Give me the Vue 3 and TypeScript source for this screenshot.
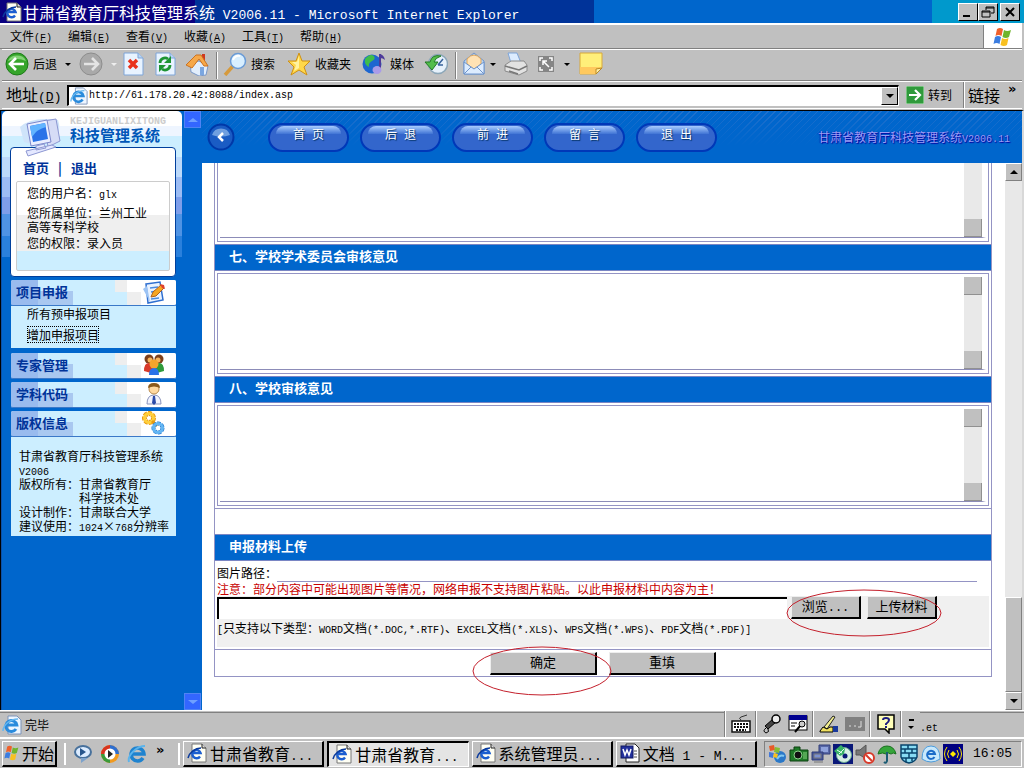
<script setup lang="ts">
import { ref } from 'vue'

interface MenuEntry { label: string; key: string }
interface Task { icon: string; label: string; latin: string; active: boolean }

const menus: MenuEntry[] = [
  { label: '文件', key: 'F' },
  { label: '编辑', key: 'E' },
  { label: '查看', key: 'V' },
  { label: '收藏', key: 'A' },
  { label: '工具', key: 'T' },
  { label: '帮助', key: 'H' },
]
const pills: string[] = ['首 页', '后 退', '前 进', '留 言', '退 出']
const tasks: Task[] = [
  { icon: '#ie-page', label: '甘肃省教育', latin: '...', active: false },
  { icon: '#ie-page', label: '甘肃省教育', latin: '...', active: true },
  { icon: '#ie-page', label: '系统管理员', latin: '...', active: false },
  { icon: '#word', label: '文档', latin: ' 1 - M...', active: false },
]
const address = ref('http://61.178.20.42:8088/index.asp')
const opinionSix = ref('')
const opinionSeven = ref('')
const opinionEight = ref('')
const picturePath = ref('')
const filePath = ref('')
</script>

<template>
  <div class="window">
    <svg class="defs" aria-hidden="true">
      <symbol id="ie-page" viewBox="0 0 20 20">
        <path d="M5 1h10l4 4v14H5z" fill="#fffff4" stroke="#777" />
        <path d="M15 1v4h4" fill="#ddd" stroke="#222" />
        <path d="M13 13.500a4.200 4.200 0 1 1 .6-3.500H6.500" fill="none" stroke="#1c5fd0" stroke-width="2.400" />
        <path d="M1 15C2 10 8 5 14 5" fill="none" stroke="#0a3a9c" stroke-width="1.500" />
      </symbol>
      <symbol id="ie-blue" viewBox="0 0 20 20">
        <path d="M6 1h9l4 4v14H6z" fill="#eef6ff" stroke="#7c93b8" />
        <path d="M14 14a5.500 5.500 0 1 1 .8-4H5" fill="none" stroke="#2a8bdc" stroke-width="3" />
        <path d="M1 16C1 10 8 4 16 4" fill="none" stroke="#66b8f0" stroke-width="1.500" />
      </symbol>
      <symbol id="word" viewBox="0 0 20 20">
        <path d="M6 1h9l4 4v14H6z" fill="#fff" stroke="#222" />
        <path d="M14 8h3M14 11h3M14 14h3" stroke="#555" />
        <rect x="1" y="3" width="12" height="12" fill="#22309c" stroke="#101860" />
        <path d="M3 6l2 6 2-5 2 5 2-6" fill="none" stroke="#fff" stroke-width="1.500" />
      </symbol>
      <symbol id="flag" viewBox="0 0 20 20">
        <path d="M4 2q3-2 6 0L8.500 9q-3-2-6 0z" fill="#f0602a" />
        <path d="M11 3q3 2 7 0l-2 7q-3 2-6.500 0z" fill="#6fb52c" />
        <path d="M2 10q3-2 6 0l-1.500 7q-3-2-6 0z" fill="#3b7de0" />
        <path d="M9 11q3 2 6.500 0L14 18q-3 2-6.500 0z" fill="#f8c020" />
      </symbol>
    </svg>

    <header class="title-bar">
      <svg class="i20"><use href="#ie-page" /></svg>
      <h1>甘肃省教育厅科技管理系统<span class="lat"> V2006.11 - Microsoft Internet Explorer</span></h1>
      <div class="win-buttons">
        <button type="button" aria-label="最小化"><svg viewBox="0 0 16 14"><path d="M3 11h7" stroke="#000" stroke-width="2" /></svg></button>
        <button type="button" aria-label="还原"><svg viewBox="0 0 16 14"><path d="M6 5V2h8v6h-3M6 3h8M2 6h8v6H2zM2 7h8" fill="none" stroke="#000" /></svg></button>
        <button type="button" aria-label="关闭" class="close"><svg viewBox="0 0 16 14"><path d="M4 3l8 8M12 3l-8 8" stroke="#000" stroke-width="2" /></svg></button>
      </div>
    </header>

    <nav class="menu-bar">
      <button v-for="m in menus" :key="m.key" type="button">{{ m.label }}<span class="lat">(<u>{{ m.key }}</u>)</span></button>
      <div class="throbber"><svg class="i20"><use href="#flag" /></svg></div>
    </nav>

    <div class="toolbar">
      <button type="button" class="w-back">
        <svg class="i24" viewBox="0 0 24 24"><circle cx="12" cy="12" r="11" fill="#36a52b" stroke="#1c7a18" /><path d="M3 9a9.500 8 0 0 1 18 0q-9-4-18 0z" fill="#83d375" /><path d="M19 12H6M11 6l-6 6 6 6" fill="none" stroke="#fff" stroke-width="2.600" /></svg>
        <span>后退</span><i class="tri"></i>
      </button>
      <button type="button" class="w-mid" aria-label="前进">
        <svg class="i24" viewBox="0 0 24 24"><circle cx="12" cy="12" r="11" fill="#a9a9a9" stroke="#8d8d8d" /><path d="M5 12h13M13 6l6 6-6 6" fill="none" stroke="#e4e4e4" stroke-width="2.600" /></svg>
        <i class="tri pale"></i>
      </button>
      <button type="button" class="w-one" aria-label="停止">
        <svg class="i24" viewBox="0 0 24 24"><path d="M3 1h14l5 5v17H3z" fill="#e8f3ff" stroke="#7fa5d8" /><path d="M17 1v5h5" fill="#b9d5f4" stroke="#7fa5d8" /><path d="M8 8l8 8M16 8l-8 8" stroke="#e8321c" stroke-width="3.500" /></svg>
      </button>
      <button type="button" class="w-one" aria-label="刷新">
        <svg class="i24" viewBox="0 0 24 24"><path d="M3 1h14l5 5v17H3z" fill="#e8f3ff" stroke="#7fa5d8" /><path d="M17 1v5h5" fill="#b9d5f4" stroke="#7fa5d8" /><path d="M7 11a5 5 0 0 1 8-4M17 13a5 5 0 0 1-8 4" fill="none" stroke="#1c9433" stroke-width="2.800" /><path d="M18 4v7h-7zM6 20v-7h7z" fill="#1c9433" /></svg>
      </button>
      <button type="button" class="w-one" aria-label="主页">
        <svg class="i24" viewBox="0 0 24 24"><path d="M17 2h3v7h-3z" fill="#d03a20" /><path d="M5 11l9-2 9 5-2 9-7 1-8-4z" fill="#e2eefc" stroke="#7a98c8" /><path d="M1 13L11 3l5 0 7 11-4 0-5-7-7 9z" fill="#f6a849" stroke="#cb7120" /><path d="M15 15h4v8h-4z" fill="#7aa6e0" /></svg>
      </button>
      <i class="sep"></i>
      <button type="button" class="w-search">
        <svg class="i24" viewBox="0 0 24 24"><path d="M2 23l8-9" stroke="#d69a3c" stroke-width="3.500" /><circle cx="15" cy="9" r="7.500" fill="#d8efff" stroke="#6a9bd6" stroke-width="1.500" /><path d="M10 8q2-5 7-4" fill="none" stroke="#fff" stroke-width="2" /></svg>
        <span>搜索</span>
      </button>
      <button type="button" class="w-fav">
        <svg class="i24" viewBox="0 0 24 24"><path d="M12 1l3 8 8 0-6 6 3 8-8-5-8 5 3-8-6-6 8 0z" fill="#ffd84a" stroke="#cf9012" /><path d="M12 4l0 12-5 3 2-6-4-3 5 0z" fill="#fff2a0" /></svg>
        <span>收藏夹</span>
      </button>
      <button type="button" class="w-media">
        <svg class="i24" viewBox="0 0 24 24"><circle cx="10" cy="12" r="9.500" fill="#1d66d0" /><path d="M3 7q5-6 9-3 2 3-2 5t-3 6q-5-2-4-8z" fill="#3fbd4a" /><path d="M18 2v15" stroke="#4d3a9a" stroke-width="2" /><path d="M18 2q4 1 5 6-2-2-5-2z" fill="#4d3a9a" /><ellipse cx="15" cy="18" rx="4.500" ry="4" fill="#a99be8" /></svg>
        <span>媒体</span>
      </button>
      <button type="button" class="w-one" aria-label="历史">
        <svg class="i24" viewBox="0 0 24 24"><circle cx="14" cy="12" r="9.500" fill="#e6f1fb" stroke="#8ba6b8" stroke-width="1.500" /><path d="M14 13l5-6M14 13h5" stroke="#38639c" stroke-width="1.500" /><path d="M17 4Q8 2 6 10H1l7 8 6-8h-4q1-4 7-6z" fill="#53bd4b" stroke="#217a24" /></svg>
      </button>
      <i class="sep"></i>
      <button type="button" class="w-mid" aria-label="邮件">
        <svg class="i24" viewBox="0 0 24 24"><path d="M2 9L12 1l10 8v13H2z" fill="#b7d4f4" stroke="#6f95cc" /><path d="M5 12V7q7-8 14 0v5l-7 5z" fill="#ffe2b4" stroke="#dba45c" /><path d="M2 10l10 7 10-7v12H2z" fill="#dcecff" stroke="#6f95cc" /><path d="M2 22l7-7M22 22l-7-7" stroke="#6f95cc" /></svg>
        <i class="tri near"></i>
      </button>
      <button type="button" class="w-one" aria-label="打印">
        <svg class="i24" viewBox="0 0 24 24"><path d="M4 1h9l4 10H7z" fill="#dcecff" stroke="#7fa5d8" /><path d="M1 13l6-4h13l3 4v6l-8 4-14-4z" fill="#e2e2e2" stroke="#8a8a8a" /><path d="M1 14l14 4 8-4M5 19l9 3" fill="none" stroke="#777" stroke-width="1.500" /></svg>
      </button>
      <button type="button" class="w-size" aria-label="全屏">
        <svg class="i20" viewBox="0 0 20 20"><rect x="2" y="2" width="16" height="16" fill="#858585" /><path d="M4 7V4h3M13 4h3v3M16 13v3h-3M7 16H4v-3M7 7l6 6M7 11V7h4" fill="none" stroke="#fff" stroke-width="1.500" /></svg>
        <i class="tri"></i>
      </button>
      <button type="button" class="w-one" aria-label="便笺">
        <svg class="i24" viewBox="0 0 24 24"><path d="M1 1h22v15l-6 6H1z" fill="#ffef7a" stroke="#d8a93a" /><path d="M1 15h22l-6 7H1z" fill="#ffc95e" /><path d="M17 22v-5l6-1z" fill="#fff0a8" stroke="#b98a24" /></svg>
      </button>
    </div>

    <form class="address-bar" @submit.prevent>
      <label for="addr">地址<span class="lat">(<u>D</u>)</span></label>
      <div class="addr-box">
        <svg class="i18"><use href="#ie-blue" /></svg>
        <input id="addr" v-model="address" type="text" />
        <button type="button" class="drop" aria-label="展开地址"><i class="tri"></i></button>
      </div>
      <button type="submit" class="go">
        <svg class="i18" viewBox="0 0 18 18"><rect width="18" height="18" fill="#2f9a3b" stroke="#bfe6c2" /><path d="M3 9h11M9 4l5 5-5 5" fill="none" stroke="#fff" stroke-width="2.200" /></svg>转到
      </button>
      <div class="links"><span>链接</span><span class="chev">»</span></div>
    </form>

    <main class="content">
      <aside class="side">
        <div class="side-col">
          <section class="brand">
            <div class="brand-head">
              <svg class="logo" viewBox="0 0 44 42">
                <path d="M2 12Q14 1 40 5q4 10-4 20-16 8-30 2z" fill="#cfe4fa" />
                <path d="M26 6l12-2 4 22-12 6z" fill="#d6dcf6" stroke="#8d97d2" />
                <path d="M9 9l20-4 4 22-20 4z" fill="#e9edff" stroke="#7d88cc" />
                <path d="M12 11l15-3 3 16-15 3z" fill="#2a72e8" />
                <path d="M12 11l15-3 1 4q-9 2-14 10z" fill="#62b4ff" />
                <path d="M18 31l8-2 2 4-10 2zM8 36l26-6 4 2-28 9z" fill="#e4e8ff" stroke="#8d97d2" />
              </svg>
              <div class="brand-text">
                <small>KEJIGUANLIXITONG</small>
                <h2>科技管理系统</h2>
              </div>
            </div>
            <div class="user-card">
              <div class="user-links"><a href="#home">首页</a><span>|</span><a href="#exit">退出</a></div>
              <div class="user-info">
                <p>您的用户名：<span class="lat">glx</span></p>
                <p class="tight">您所属单位：兰州工业高等专科学校</p>
                <p>您的权限：录入员</p>
              </div>
            </div>
          </section>

          <section class="group first">
            <h3>项目申报
              <svg class="i24" viewBox="0 0 24 24"><path d="M4 4l14-2 3 18-15 3z" fill="#eaf3ff" stroke="#2f6fd0" stroke-width="1.500" /><path d="M1 9l4-3 3 16z" fill="#9cc3f4" /><path d="M8 8l8-1M9 12l6-1M9 19l8-1" stroke="#4b8ae0" stroke-width="1.500" /><path d="M9 17l2-5 8-7 3 3-8 8z" fill="#f6a623" stroke="#b0601a" /><path d="M18 4l4 1 1 4-3-1z" fill="#e0402c" /></svg>
            </h3>
            <ul>
              <li><a href="#all">所有预申报项目</a></li>
              <li><a href="#add" class="focused">增加申报项目</a></li>
            </ul>
          </section>
          <section class="group">
            <h3>专家管理
              <svg class="i24" viewBox="0 0 24 24"><circle cx="7" cy="6" r="4.500" fill="#7c3f1c" /><circle cx="17" cy="6" r="4.500" fill="#7c3f1c" /><path d="M2 18q0-9 6-8l4 6-3 4z" fill="#d83a2a" /><path d="M22 18q0-9-6-8l-4 6 3 4z" fill="#2f9a3b" /><circle cx="8" cy="7" r="2.500" fill="#f6b35a" /><circle cx="16" cy="7" r="2.500" fill="#f6b35a" /><circle cx="12" cy="11" r="4.500" fill="#f4a52c" /><path d="M7 22q0-7 5-7t5 7z" fill="#2a72e8" /></svg>
            </h3>
          </section>
          <section class="group">
            <h3>学科代码
              <svg class="i24" viewBox="0 0 24 24"><path d="M5 22q0-9 7-9t7 9z" fill="#f2f4ff" stroke="#8a94bc" /><path d="M11 14h2l1 7-2 2-2-2z" fill="#2a4aa8" /><circle cx="12" cy="7" r="5" fill="#ffd9a0" stroke="#b98a4c" /><path d="M6 6q0-5 6-5t6 5q-6-3-12 0z" fill="#8a5a1c" /></svg>
            </h3>
          </section>
          <section class="group last">
            <h3>版权信息
              <svg class="i24" viewBox="0 0 24 24"><circle cx="7" cy="7" r="4.500" fill="none" stroke="#e89a10" stroke-width="5" stroke-dasharray="3 1" /><circle cx="7" cy="7" r="4.500" fill="none" stroke="#ffcf3a" stroke-width="3" /><path d="M10 10l5 5" stroke="#e89a10" stroke-width="3" /><circle cx="16" cy="17" r="4.500" fill="none" stroke="#1c72c8" stroke-width="4" stroke-dasharray="3 1" /><circle cx="16" cy="17" r="4.500" fill="none" stroke="#63b6f4" stroke-width="3" /></svg>
            </h3>
            <div class="copyright">
              <p>甘肃省教育厅科技管理系统<span class="lat">V2006</span></p>
              <dl>
                <dt>版权所有：</dt><dd>甘肃省教育厅<br />科学技术处</dd>
                <dt>设计制作：</dt><dd>甘肃联合大学</dd>
                <dt>建议使用：</dt><dd><span class="lat">1024</span><span class="times">×</span><span class="lat">768</span>分辨率</dd>
              </dl>
            </div>
          </section>
        </div>
        <div class="side-scroll">
          <button type="button" aria-label="向上"><i class="tri up"></i></button>
          <button type="button" aria-label="向下"><i class="tri"></i></button>
        </div>
      </aside>

      <section class="page">
        <header class="page-head">
          <button type="button" class="round" aria-label="收起"><svg viewBox="0 0 28 28"><circle cx="14" cy="14" r="12.500" fill="#1a5cc4" stroke="#0038a8" stroke-width="2" /><path d="M5 12a9.500 9.500 0 0 1 18 0q-9 3-18 0z" fill="#6f9fe0" /><path d="M16 10l-4 4 4 4" fill="none" stroke="#fff" stroke-width="2.500" /></svg></button>
          <nav>
            <button v-for="p in pills" :key="p" type="button" class="pill">{{ p }}</button>
          </nav>
          <p class="sys">甘肃省教育厅科技管理系统<span class="lat">V2006.11</span></p>
        </header>

        <div class="page-body">
          <form class="sheet" @submit.prevent>
            <div class="area-cell cut">
              <div class="area-box">
                <textarea v-model="opinionSix" aria-label="意见"></textarea>
                <div class="area-scroll"><i></i></div>
              </div>
            </div>
            <h3><label for="op7">七、学校学术委员会审核意见</label></h3>
            <div class="area-cell">
              <div class="area-box">
                <textarea id="op7" v-model="opinionSeven"></textarea>
                <div class="area-scroll"><i></i><i></i></div>
              </div>
            </div>
            <h3><label for="op8">八、学校审核意见</label></h3>
            <div class="area-cell">
              <div class="area-box">
                <textarea id="op8" v-model="opinionEight"></textarea>
                <div class="area-scroll"><i></i><i></i></div>
              </div>
            </div>
            <div class="blank"></div>
            <h3>申报材料上传</h3>
            <div class="upload">
              <div class="path-row">
                <label for="pic">图片路径：</label>
                <input id="pic" v-model="picturePath" type="text" />
              </div>
              <p class="warn">注意：部分内容中可能出现图片等情况，网络申报不支持图片粘贴。以此申报材料中内容为主！</p>
              <div class="file-zone">
                <div class="file-row">
                  <input v-model="filePath" type="text" aria-label="上传文件" />
                  <div class="file-buttons">
                    <button type="button">浏览<span class="lat">...</span></button>
                    <button type="button">上传材料</button>
                    <svg class="ring ring-file" viewBox="0 0 156 48"><ellipse cx="78" cy="24" rx="77" ry="23" /></svg>
                  </div>
                </div>
                <p class="types"><span class="lat">[</span>只支持以下类型：<span class="lat">WORD</span>文档<span class="lat">(*.DOC,*.RTF)</span>、<span class="lat">EXCEL</span>文档<span class="lat">(*.XLS)</span>、<span class="lat">WPS</span>文档<span class="lat">(*.WPS)</span>、<span class="lat">PDF</span>文档<span class="lat">(*.PDF)]</span></p>
              </div>
            </div>
            <div class="actions">
              <div class="ok">
                <button type="submit">确定</button>
                <svg class="ring ring-ok" viewBox="0 0 140 50"><ellipse cx="70" cy="25" rx="69" ry="24" /></svg>
              </div>
              <button type="reset">重填</button>
            </div>
          </form>
          <div class="scrollbar">
            <button type="button" aria-label="向上滚动"><i class="tri up"></i></button>
            <div class="thumb"></div>
            <button type="button" aria-label="向下滚动"><i class="tri"></i></button>
          </div>
        </div>
      </section>
    </main>

    <footer class="status">
      <div class="done"><svg class="i20"><use href="#ie-blue" /></svg>完毕</div>
      <div class="ime">
        <div class="cell"><svg class="i20" viewBox="0 0 20 20"><path d="M10 6q-3-2 0-3t6-2" fill="none" stroke="#333" /><rect x="1" y="7" width="18" height="11" fill="#fff" stroke="#111" stroke-width="1.500" /><path d="M3 10h14M3 13h14M5 16h10" stroke="#111" stroke-width="2" stroke-dasharray="2 1" /></svg></div>
        <div class="cell">
          <svg class="i20" viewBox="0 0 20 20"><path d="M3 12l8-7 3 3-8 7z" fill="#444" stroke="#000" /><circle cx="14" cy="5" r="4" fill="#eee" stroke="#000" stroke-width="1.500" /><path d="M4 14q-4 3 0 5 4-1 2-4" fill="none" stroke="#000" /></svg>
          <svg class="i20" viewBox="0 0 20 20"><rect x="1" y="2" width="18" height="14" fill="#fff" stroke="#000" /><rect x="1" y="1" width="18" height="5" fill="#000090" /><path d="M3 9h6M3 12h4" stroke="#000" /><circle cx="14" cy="10" r="3" fill="#ccc" stroke="#000" /><path d="M12 12l-5 6" stroke="#000" stroke-width="2" /></svg>
        </div>
        <div class="cell">
          <svg class="i20" viewBox="0 0 20 20"><path d="M5 13L14 2l2 1-8 12z" fill="#f4f090" stroke="#222" /><path d="M1 17l3-4 4 2 3-2h3v5H1z" fill="#f0e060" stroke="#000" /><path d="M14 12h5v6h-5z" fill="#1a3a9c" /></svg>
          <svg class="i20" viewBox="0 0 20 20"><rect x="0" y="3" width="20" height="14" fill="#808080" /><path d="M4 12h2M9 12h2M16 7v6h-3" fill="none" stroke="#ddd" /></svg>
        </div>
        <div class="cell"><svg class="i20" viewBox="0 0 20 20"><path d="M2 1h16v14h-5v4l-4-4H2z" fill="#ffffb8" stroke="#000" stroke-width="1.500" /><path d="M7 6q0-2 3-2t3 2-3 4v1M10 12v2" fill="none" stroke="#1c1c80" stroke-width="2" /></svg></div>
        <div class="cell opts"><i class="dash"></i><i class="tri"></i></div>
      </div>
      <div class="zone"><span class="lat">.et</span></div>
    </footer>

    <footer class="taskbar">
      <button type="button" class="start"><svg class="i16"><use href="#flag" /></svg>开始</button>
      <div class="quick">
        <svg class="i20" viewBox="0 0 20 20"><ellipse cx="10" cy="8" rx="8" ry="6" fill="#dcecff" stroke="#48719c" stroke-width="2" /><path d="M7 4l6 4-6 4z" fill="#28568c" /><path d="M8 14h7l-7 5z" fill="#7da2cb" /></svg>
        <svg class="i20" viewBox="0 0 20 20"><circle cx="10" cy="10" r="9" fill="#f09a20" /><path d="M10 10V1a9 9 0 0 0-9 9z" fill="#d83420" /><path d="M10 10H1a9 9 0 0 0 9 9z" fill="#3b9a3a" /><path d="M10 10V1a9 9 0 0 1 9 9z" fill="#2f6fd0" /><circle cx="10" cy="10" r="5.500" fill="#fff" /><path d="M8 6l5 4-5 4z" fill="#222" /></svg>
        <svg class="i20" viewBox="0 0 20 20"><path d="M16 14a6.500 6.500 0 1 1 1-4H5" fill="none" stroke="#1f83cf" stroke-width="3.500" /><path d="M2 18C0 11 10 2 18 2" fill="none" stroke="#5bb4ec" stroke-width="2" /></svg>
        <span class="chev">»</span>
      </div>
      <div class="tasks">
        <button v-for="(t, i) in tasks" :key="i" type="button" :class="{ active: t.active }">
          <svg class="i20"><use :href="t.icon" /></svg><span class="task-name">{{ t.label }}<span class="lat">{{ t.latin }}</span></span>
        </button>
      </div>
      <div class="tray">
        <svg class="i20" viewBox="0 0 20 20"><circle cx="13" cy="13" r="6" fill="#2a78c8" /><path d="M10 15q3-5 7-3" stroke="#82c8f0" stroke-width="2" fill="none" /><path d="M2 2l5-1 1 5-5 1z" fill="#e85a28" /><path d="M8 3l5 1-1 5-5-1z" fill="#86bd34" /><path d="M2 8l5 1-1 5-4-1z" fill="#4378d8" /><path d="M7 9l4 1-1 4-4-1z" fill="#f8c020" /></svg>
        <svg class="i20" viewBox="0 0 20 20"><path d="M1 6h4V3h6v3h8v11H1z" fill="#1f7a28" stroke="#0c4010" /><circle cx="9" cy="11" r="4" fill="#111" stroke="#8cd48c" /><path d="M14 8h4v7h-4z" fill="#55a855" /></svg>
        <svg class="i20" viewBox="0 0 20 20"><path d="M8 1h11v9H8z" fill="#5868a8" stroke="#303c78" /><path d="M10 3h7v5h-7z" fill="#8fa2dc" /><path d="M1 8h11v8H1z" fill="#48589c" stroke="#303c78" /><path d="M3 10h7v4H3zM3 18h9" fill="#7c90d0" stroke="#777" /></svg>
        <svg class="i20" viewBox="0 0 20 20"><rect width="20" height="20" fill="#0a1878" /><circle cx="11" cy="11" r="7.500" fill="#d8f0e4" stroke="#66a890" /><circle cx="12" cy="12" r="2.500" fill="#0a1878" /><path d="M1 7l7-6 4 4-1 5-4 2z" fill="#38b068" /><path d="M4 6l5 3M6 10l5-5" stroke="#e4fff0" /></svg>
        <svg class="i20" viewBox="0 0 20 20"><path d="M1 6h4l6-5v14l-6-4H1z" fill="#777" stroke="#555" /><circle cx="14" cy="14" r="5" fill="#fff" stroke="#d83a2a" stroke-width="2" /><path d="M11 11l6 6" stroke="#d83a2a" stroke-width="2" /></svg>
        <svg class="i20" viewBox="0 0 20 20"><path d="M1 10Q3 2 10 2t9 8q-3-2-5 0-3-2-5 0-3-2-8 0z" fill="#35a53a" stroke="#19701e" /><path d="M10 8v9q-1 3-3 1" fill="none" stroke="#1c5c74" stroke-width="2" /></svg>
        <svg class="i20" viewBox="0 0 20 20"><path d="M2 1h16v12q-2 5-8 6-6-1-8-6z" fill="#88dcf4" stroke="#08446c" stroke-width="1.500" /><path d="M2 5h16M2 9h16M3 14h14M9 1v4M13 5v4M6 5v4M10 9v5M7 14v4M13 14v3" stroke="#08446c" stroke-width="1.500" /></svg>
        <svg class="i20" viewBox="0 0 20 20"><path d="M1 15q0-13 9-13t9 13q-9 6-18 0z" fill="#c8e8fc" stroke="#4c9cdc" /><path d="M13.500 13a4 4 0 1 1 .5-3H7" fill="none" stroke="#1c6cc8" stroke-width="2" /></svg>
        <svg class="i20" viewBox="0 0 20 20"><rect width="20" height="20" fill="#000080" /><path d="M10 7l3 3-3 3-3-3z" fill="#ffe800" /><path d="M6 6q-3 4 0 8M14 6q3 4 0 8M4 3q-5 7 0 14M16 3q5 7 0 14" fill="none" stroke="#ffe800" /></svg>
        <time class="lat">16:05</time>
      </div>
    </footer>
  </div>
</template>

<style>
html, body { height: 100%; }
body { margin: 0; overflow: hidden; }
</style>

<style scoped>
* { box-sizing: border-box; }
.window {
  display: flex; flex-direction: column; height: 100vh;
  background: #c0c0c0; color: #000;
  font-family: "Noto Sans CJK SC", "Liberation Sans", sans-serif;
  font-size: 12px; line-height: 14px;
}
.lat { font-family: "Liberation Mono", monospace; font-size: 10px; line-height: 10px; white-space: pre; }
h1, h2, h3, p, ul, dl, dd { margin: 0; padding: 0; font-weight: normal; }
button { font: inherit; color: inherit; margin: 0; padding: 0; border: 0; background: none; cursor: pointer; }
input, textarea { font: inherit; margin: 0; padding: 0; border: 0; outline: 0; border-radius: 0; min-width: 0; }
a { color: inherit; text-decoration: none; }
i { display: block; flex: none; }
svg { flex: none; display: block; }
.defs { position: absolute; width: 0; height: 0; }
.i16 { width: 16px; height: 16px; }
.i18 { width: 18px; height: 18px; }
.i20 { width: 20px; height: 20px; }
.i24 { width: 24px; height: 24px; }
.tri { width: 0; height: 0; border: 3px solid transparent; border-top-color: currentColor; border-bottom: 0; }
.tri.up { border-top: 0; border-bottom: 3px solid currentColor; }

.title-bar {
  flex: none; display: flex; align-items: center; height: 23px; padding: 0 4px 0 2px; color: #fff;
  background: linear-gradient(90deg, #0a0080 0 19%, #003399 19% 58%, #0066cc 58% 91%, #0099cc 91%);
}
.title-bar h1 { flex: 1; font-size: 16px; line-height: 22px; padding-left: 1px; white-space: nowrap; }
.title-bar .lat { font-size: 13px; }
.win-buttons { display: flex; }
.win-buttons button {
  width: 20px; height: 18px; display: grid; place-items: center; background: #c0c0c0;
  border: 1px solid; border-color: #fff #000 #000 #fff;
}
.win-buttons svg { width: 16px; height: 14px; }
.win-buttons .close { margin-left: 2px; }

.menu-bar {
  flex: none; display: flex; align-items: center; gap: 16px; height: 26px; padding-left: 10px;
  border-top: 2px solid #fff; border-bottom: 1px solid #808080; margin: 0 2px 0 0;
}
.menu-bar button { width: 42px; white-space: nowrap; text-align: left; }
.throbber { margin-left: auto; width: 39px; align-self: stretch; background: #fff; display: grid; place-items: center; border-left: 1px solid #808080; }

.toolbar {
  flex: none; display: flex; align-items: center; height: 32px; padding-left: 0; margin: 0 2px;
  border-top: 1px solid #fff; border-bottom: 1px solid #808080;
}
.toolbar button { display: flex; align-items: center; gap: 4px; height: 28px; padding: 0 0 2px 3px; white-space: nowrap; }
.toolbar .tri { margin-left: 4px; }
.toolbar .tri.near { margin-left: 0; }
.pale { color: #eee; }
.w-back { width: 74px; }
.w-mid { width: 42px; }
.w-one { width: 32px; }
.w-search { width: 64px; }
.w-fav { width: 75px; }
.w-media { width: 62px; }
.w-size { width: 43px; }
.sep { width: 2px; height: 27px; margin: 0 2px; background: linear-gradient(90deg, #808080 50%, #fff 50%); }

.address-bar {
  flex: none; display: flex; align-items: center; height: 28px; margin: 0 2px; padding-left: 4px;
  border-top: 1px solid #fff; border-bottom: 1px solid #fff;
}
.address-bar label { width: 61px; font-size: 16px; line-height: 20px; white-space: nowrap; padding-bottom: 2px; }
.address-bar label .lat { font-size: 13px; }
.addr-box {
  flex: 1; display: flex; align-items: center; height: 21px; background: #fff; padding-left: 1px;
  border: 1px solid; border-color: #000 #fff #fff #000; border-width: 2px 1px 1px 2px;
}
.addr-box input { flex: 1; padding-left: 1px; font-family: "Liberation Mono", monospace; font-size: 10px; background: none; }
.drop { width: 17px; height: 18px; display: grid; place-items: center; background: #c0c0c0; border: 1px solid; border-color: #fff #000 #000 #fff; }
.drop .tri { border-width: 4px 4px 0; }
.go { display: flex; align-items: center; gap: 4px; padding-left: 7px; width: 65px; height: 24px; white-space: nowrap; }
.links { display: flex; align-items: center; width: 58px; height: 26px; border-left: 1px solid #fff; padding-left: 3px; font-size: 16px; gap: 8px; box-shadow: -1px 0 #808080; }
.links .chev { align-self: flex-start; }
.chev { font-family: "DejaVu Sans", sans-serif; font-weight: bold; font-size: 13px; line-height: 14px; }

.content {
  flex: 1; min-height: 0; display: flex; margin-top: 1px;
  border: solid #000; border-width: 1px 0 0 1px; border-right: 2px solid #d8d8d8;
}

.side { flex: none; display: flex; justify-content: space-between; width: 201px; background: #0066cc; border-left: 1px solid #0a50a8; }
.side-col { width: 180px; }
.side-scroll { display: flex; flex-direction: column; justify-content: space-between; width: 18px; }
.side-scroll button { width: 17px; height: 17px; display: grid; place-items: center; background: #3366ff; border: 1px solid #4f83f4; color: #6fa0ff; }
.side-scroll .tri { border-left-width: 5px; border-right-width: 5px; border-top-width: 4px; }
.side-scroll .tri.up { border-top-width: 0; border-bottom-width: 4px; }

.brand {
  border-radius: 5px 5px 0 0; padding: 0 6px 0 8px;
  background: linear-gradient(#fff 0 9%, #eef5ff 9% 15%, #cceeff 15% 28%, #bcd9fa 28% 40%, #9cbcf4 40% 52%, #7e9eea 52% 62%, #4f93e4 62% 75%, #2a80dc 75% 88%, #0066cc 88%);
}
.brand-head { display: flex; height: 36px; position: relative; }
.logo { position: absolute; left: 8px; top: 4px; width: 44px; height: 42px; }
.brand-text { margin-left: 60px; }
.brand-text small { display: block; margin-top: 6px; font: bold 10px/10px "Liberation Mono", monospace; color: #ccc; }
.brand-text h2 { font-size: 15px; line-height: 16px; font-weight: bold; color: #0057b8; white-space: nowrap; }
.user-card { background: #fff; border: 1px solid #003f9c; border-radius: 4px; padding: 12px 5px 6px; height: 130px; }
.user-links { display: flex; gap: 9px; padding-left: 7px; font-size: 13px; line-height: 15px; font-weight: bold; color: #003399; }
.user-info {
  margin-top: 6px; height: 90px; padding: 4px 16px 0 10px; border: 1px solid #ccc; border-radius: 2px;
  background: linear-gradient(#fff 0 38%, #efefef 38% 78%, #cceeff 78%);
}
.user-info p { height: 14px; margin-bottom: 6px; }
.user-info .tight { height: 28px; margin-bottom: 2px; width: 122px; }

.group { margin: 4px 6px 0 9px; }
.group.first { margin-top: 3px; margin-bottom: 5px; }
.group.first + .group { margin-top: 0; }
.group h3 {
  display: flex; align-items: center; justify-content: space-between; height: 26px; padding: 0 10px 2px 5px;
  margin-bottom: -1px; font-size: 13px; font-weight: bold; color: #003399; border-radius: 2px; border-bottom: 1px solid #3a78c8;
  background:
    linear-gradient(#99bbee, #99bbee) 0 0 / 27px 100% no-repeat,
    linear-gradient(#a9c8f0, #a9c8f0) 27px 11px / 35px 100% no-repeat,
    linear-gradient(#eee, #eee) 104px 0 / 12px 12px no-repeat,
    linear-gradient(#fff, #fff) 116px 0 / 60px 12px no-repeat,
    linear-gradient(#eee, #eee) 116px 12px / 14px 14px no-repeat,
    linear-gradient(#fff, #fff) 130px 12px / 60px 14px no-repeat,
    #cceeff;
}
.group ul { list-style: none; background: #cceeff; padding: 1px 0 0 16px; height: 42px; margin-top: 1px; }
.group li { height: 21px; line-height: 14px; }
.group li a { color: #000; }
.focused { outline: 1px dotted #000; outline-offset: -1px; }
.copyright { margin-top: 1px; background: #cceeff; height: 99px; padding: 12px 6px 0 8px; white-space: nowrap; }
.copyright p { white-space: normal; width: 146px; height: 28px; }
.copyright dl { display: grid; grid-template-columns: 60px auto; grid-template-rows: 28px 14px 14px; }
.times { display: inline-block; width: 12px; text-align: center; line-height: 12px; }

.page { flex: 1; min-width: 0; display: flex; flex-direction: column; background: #fff; }
.page-head {
  flex: none; display: flex; align-items: center; height: 52px; padding: 0 12px 0 5px;
  background:
    linear-gradient(rgba(0, 102, 204, 0), #0066cc 66%),
    repeating-linear-gradient(135deg, #2070cc 0 1px, #0066cc 1px 5px);
}
.round svg { width: 28px; height: 28px; }
.page-head nav { display: flex; gap: 11px; margin-left: 33px; }
.pill {
  position: relative; z-index: 0; width: 81px; height: 29px; border: 2px solid #0038b8; border-radius: 15px;
  color: #fff; padding-bottom: 3px; font-family: "Liberation Mono", "Noto Sans CJK SC", monospace;
  text-shadow: 1px 1px 1px #003060; white-space: pre; background: #3366cc;
}
.pill::before {
  content: ""; position: absolute; z-index: -1; inset: 1px 6px auto; height: 8px;
  border-radius: 8px 8px 0 0; background: linear-gradient(#a8ccff, #3f73d4);
}
.sys { margin-left: auto; color: #9a9cf4; text-shadow: 1px 1px 1px #0000a0, -1px 0 1px #0030b0; white-space: nowrap; }

.page-body { flex: 1; min-height: 0; display: flex; justify-content: space-between; }
.sheet { flex: 1; margin: 0 13px 0 12px; align-self: flex-start; border: 1px solid #9494c4; border-top: 0; }
.sheet h3 {
  height: 27px; padding: 0 14px; line-height: 22px; font-size: 13px; font-weight: bold; color: #fff;
  background: #0066cc; border: solid #7a86c4; border-width: 1px 0;
}
.area-cell { padding: 2px; height: 105px; }
.area-box { height: 101px; display: flex; border: 1px solid #9494c4; padding: 3px 2px; }
.area-box textarea { flex: 1; resize: none; border-bottom: 1px solid #8c8cb8; background: #fff; overflow: hidden; }
.area-scroll { width: 22px; background: #e9e9e9; display: flex; flex-direction: column; justify-content: space-between; border-right: 4px solid #fff; border-bottom: 1px solid #8c8cb8; }
.area-scroll i { height: 18px; background: #c0c0c0; border-right: 1px solid #909090; border-bottom: 1px solid #909090; }
.area-cell.cut { height: 81px; padding-top: 0; }
.cut .area-box { height: 79px; border-top: 0; padding-top: 0; }
.cut .area-scroll { justify-content: flex-end; }
.blank { height: 26px; border-top: 1px solid #9494c4; }
.upload { padding: 6px 2px 2px; height: 88px; }
.path-row { display: flex; align-items: flex-start; height: 15px; }
.path-row label { line-height: 12px; }
.path-row input { flex: 1; height: 15px; margin-right: 12px; border-bottom: 1px solid #9494c4; }
.warn { color: #c80000; line-height: 14px; white-space: nowrap; }
.file-zone { background: #f0f0f0; height: 51px; }
.file-row { display: flex; align-items: flex-start; height: 24px; }
.file-row input { flex: 1; height: 22px; margin-top: 1px; background: #fff; border: solid #000; border-width: 2px 0 0 2px; }
.file-buttons { display: flex; gap: 6px; padding-left: 4px; width: 202px; position: relative; }
.file-buttons button, .actions button { background: #c0c0c0; border: solid; border-width: 1px 2px 2px 1px; border-color: #eee #000 #000 #eee; white-space: nowrap; padding-bottom: 2px; }
.file-buttons button { width: 70px; height: 23px; font-size: 13px; }
.file-buttons .lat { font-size: 12px; }
.types { line-height: 16px; white-space: nowrap; }
.actions { display: flex; justify-content: center; gap: 12px; border-top: 1px solid #9494c4; height: 27px; padding: 2px 0 0; }
.actions button { width: 107px; height: 23px; font-size: 13px; }
.ok { position: relative; }
.ring { position: absolute; fill: none; stroke: #c4202c; stroke-width: 1; pointer-events: none; }
.ring-file { left: -1px; top: -7px; width: 156px; height: 48px; }
.ring-ok { left: -18px; top: -6px; width: 140px; height: 50px; }

.scrollbar { flex: none; width: 17px; display: flex; flex-direction: column; background: #e8e8e8; }
.scrollbar button { width: 17px; height: 18px; display: grid; place-items: center; background: #c0c0c0; border: 1px solid; border-color: #fff #808080 #808080 #fff; }
.scrollbar .tri { border-left-width: 4px; border-right-width: 4px; border-top-width: 4px; }
.scrollbar .tri.up { border-top-width: 0; border-bottom-width: 4px; }
.thumb { margin-top: auto; height: 95px; background: #c0c0c0; border: 1px solid; border-color: #fff #808080 #808080 #fff; }

.status { flex: none; display: flex; align-items: center; height: 27px; border-top: 1px solid #fff; }
.done { flex: 1; display: flex; align-items: center; gap: 3px; height: 24px; padding-left: 2px; border-top: 1px solid #808080; }
.ime { display: flex; height: 26px; }
.cell { display: flex; align-items: center; gap: 6px; padding: 0 5px; border-left: 1px solid #fff; box-shadow: -1px 0 #808080; }
.opts { flex-direction: column; justify-content: center; gap: 5px; padding: 0 6px; }
.dash { width: 5px; height: 2px; background: #000; }
.zone { width: 104px; height: 24px; border-top: 1px solid #808080; line-height: 26px; }

.taskbar { flex: none; display: flex; align-items: center; height: 31px; padding: 0 2px; border-top: 2px solid #fff; font-size: 16px; line-height: 22px; }
.taskbar .lat { font-size: 13px; }
.start { display: flex; align-items: center; gap: 2px; width: 55px; height: 26px; padding-left: 1px; border: solid; border-width: 1px 2px 2px 1px; border-color: #fff #000 #000 #fff; white-space: nowrap; }
.quick { display: flex; align-items: center; gap: 7px; width: 116px; height: 22px; margin: 0 3px 0 7px; padding-left: 7px; border: solid #fff; border-width: 0 2px; }
.quick .chev { padding-left: 2px; align-self: flex-start; }
.tasks { flex: 1; min-width: 0; display: flex; gap: 3px; }
.tasks button {
  flex: 1; min-width: 0; height: 26px; display: flex; align-items: center; gap: 3px; padding-left: 3px;
  border: solid; border-width: 1px 2px 2px 1px; border-color: #fff #000 #000 #fff; white-space: nowrap;
}
.tasks .active { background: #e4e4e4; border-color: #000 #fff #fff #000; border-width: 2px 1px 1px 2px; }
.tray { display: flex; align-items: center; gap: 2px; width: 258px; height: 26px; margin-left: 7px; padding-left: 2px; border: 1px solid; border-color: #808080 #fff #fff #808080; }
.tray time { margin-left: auto; padding-right: 9px; line-height: 20px; }
</style>
